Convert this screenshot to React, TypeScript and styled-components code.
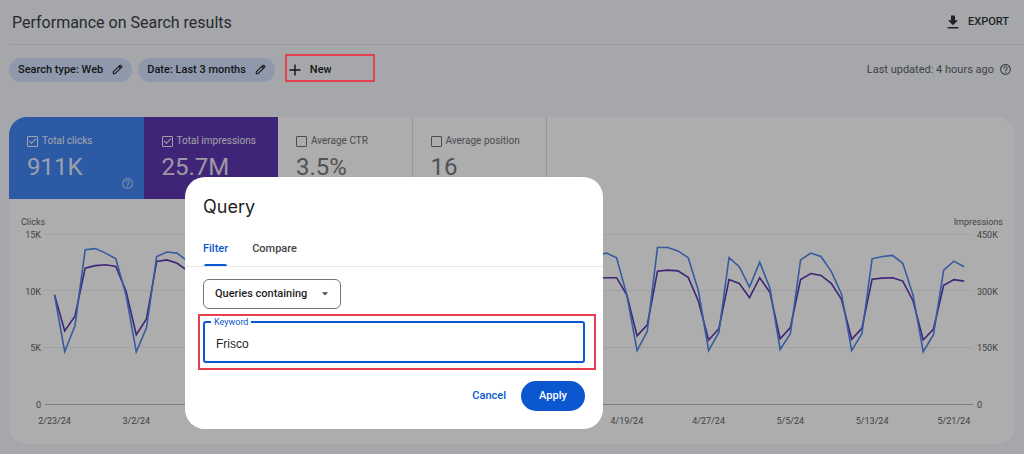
import React, { useState } from 'react';
import styled, { createGlobalStyle, css } from 'styled-components';

const display = `Inter, Roboto, "Liberation Sans", sans-serif`;
const body = `Roboto, "Liberation Sans", sans-serif`;

const GlobalStyle = createGlobalStyle`
  *, *::before, *::after { box-sizing: border-box; }
  body {
    margin: 0;
    background: #f3f6fc;
    color: #3c4043;
    font: 11px/16px ${body};
  }
  button, input, select { font: inherit; color: inherit; margin: 0; }
  h1, h2 { margin: 0; font-weight: 400; }
`;

/* ---------- report page ---------- */

const Page = styled.div`
  min-height: 100vh;
  padding: 0 9px 10px;
`;

const Header = styled.header`
  display: flex;
  align-items: center;
  justify-content: space-between;
  height: 45px;
  margin-right: -9px;
  padding: 1px 15px 0 3px;
  border-bottom: 1px solid #e3e6ec;
`;

const Title = styled.h1`
  font-size: 16px;
  line-height: 20px;
  color: #3c4043;
`;

const PlainButton = styled.button`
  display: inline-flex;
  align-items: center;
  gap: 9px;
  padding: 0;
  border: 0;
  background: none;
  color: #303236;
  font-weight: 500;
  cursor: pointer;
`;

const ExportButton = styled(PlainButton)`
  padding-bottom: 2px;
`;

const FilterBar = styled.div`
  display: flex;
  align-items: center;
  gap: 6px;
  height: 49px;
`;

const Chip = styled.button`
  display: inline-flex;
  align-items: center;
  gap: 9px;
  height: 24px;
  padding: 0 9px;
  border: 0;
  border-radius: 12px;
  background: #d3e2fd;
  color: #1f1f1f;
  font-weight: 500;
  cursor: pointer;
`;

const highlight = css`
  content: '';
  position: absolute;
  border: 2px solid #e5404e;
  pointer-events: none;
  z-index: 3;
`;

const NewFilter = styled.div`
  position: relative;
  margin-left: 4px;
  width: 90px;
  height: 28px;
  display: flex;
  align-items: center;
  padding: 0 4px;
  &::after { ${highlight} inset: -2px 0 2px; }
`;

const NewButton = styled(PlainButton)`
  color: #1f1f1f;
`;

const Updated = styled.div`
  display: flex;
  align-items: center;
  gap: 5px;
  margin-left: auto;
  padding-right: 3px;
  color: #5f6368;
`;

const Card = styled.section`
  margin-top: 23px;
  border-radius: 18px;
  background: #fff;
  overflow: hidden;
`;

const Metrics = styled.div`
  display: flex;
  width: 538px;
`;

const Metric = styled.label<{ $fill?: string }>`
  flex: 1;
  position: relative;
  height: 82px;
  padding: 16px 0 0 18px;
  border-right: 1px solid ${p => p.$fill ?? '#e0e0e0'};
  background: ${p => p.$fill ?? 'transparent'};
  color: ${p => (p.$fill ? '#fff' : '#5f6368')};
  cursor: pointer;
`;

const MetricName = styled.span`
  display: flex;
  align-items: center;
  gap: 4px;
  font-size: 10px;
  opacity: 0.9;
  white-space: nowrap;
`;

const Tick = styled.input`
  appearance: none;
  width: 11px;
  height: 11px;
  border: 1px solid currentColor;
  border-radius: 1px;
  display: grid;
  place-items: center;
  &:checked::before {
    content: '';
    width: 7px;
    height: 4px;
    border: solid currentColor;
    border-width: 0 0 1px 1px;
    transform: translateY(-1px) rotate(-45deg);
  }
`;

const MetricValue = styled.span`
  display: block;
  padding-top: 4px;
  font-size: 24px;
  line-height: 28px;
  opacity: 0.85;
`;

const MetricHelp = styled.span`
  position: absolute;
  right: 9px;
  bottom: 9px;
  display: flex;
  opacity: 0.6;
`;

/* ---------- chart ---------- */

const Chart = styled.div`
  padding: 16px 10px 9px 12px;
  color: #5f6368;
  font-size: 9px;
  line-height: 16px;
`;

const AxisTitles = styled.div`
  display: flex;
  justify-content: space-between;
  margin-bottom: 5px;
  padding-right: 2px;
  line-height: 15px;
`;

const PlotRow = styled.div`
  display: grid;
  grid-template-columns: 20px minmax(0, 1fr) 28px;
  column-gap: 4px;
`;

const Axis = styled.div<{ $align: 'left' | 'right' }>`
  display: flex;
  flex-direction: column;
  justify-content: space-between;
  height: 186px;
  margin: -8px 0;
  text-align: ${p => p.$align};
`;

const Plot = styled.svg`
  display: block;
  width: 100%;
  height: 170px;
  overflow: visible;
  path, line { fill: none; vector-effect: non-scaling-stroke; }
`;

const Dates = styled.div`
  position: relative;
  grid-column: 2;
  height: 30px;
`;

const DateLabel = styled.span`
  position: absolute;
  top: 8px;
  transform: translateX(-50%);
`;

/* ---------- dialog ---------- */

const Backdrop = styled.div`
  position: fixed;
  inset: 0;
  z-index: 2;
  padding: 177px 185px 0;
  background: rgba(0, 0, 0, 0.32);
`;

const Dialog = styled.form`
  width: 418px;
  padding: 18px 18px;
  border-radius: 20px;
  background: #fff;
  font-weight: 500;
`;

const DialogTitle = styled.h2`
  font-family: ${display};
  font-size: 18px;
  line-height: 24px;
  color: #1f1f1f;
`;

const Tabs = styled.div`
  display: flex;
  gap: 24px;
  margin: 12px -18px 0;
  padding: 0 18px;
  border-bottom: 1px solid #e6e8eb;
`;

const Tab = styled.button<{ $active?: boolean }>`
  position: relative;
  height: 35px;
  padding: 0;
  border: 0;
  background: none;
  color: ${p => (p.$active ? '#0b57d0' : '#444746')};
  cursor: pointer;
  &::after {
    content: '';
    position: absolute;
    inset: auto 1px 0;
    height: 2px;
    border-radius: 2px 2px 0 0;
    background: ${p => (p.$active ? '#0b57d0' : 'transparent')};
  }
`;

const SelectBox = styled.div`
  display: grid;
  align-items: center;
  width: 138px;
  margin-top: 12px;
  > * { grid-area: 1 / 1; }
  > svg { justify-self: end; margin-right: 13px; pointer-events: none; }
`;

const Select = styled.select`
  appearance: none;
  width: 100%;
  height: 30px;
  padding: 0 11px;
  border: 1px solid #747775;
  border-radius: 6px;
  background: #fff;
  color: #1f1f1f;
  font-weight: 500;
`;

const Field = styled.div`
  position: relative;
  margin-top: 12px;
  &::after { ${highlight} inset: -7px -11px -7px -5px; }
`;

const FieldLabel = styled.label`
  position: absolute;
  top: -5px;
  left: 8px;
  padding: 0 3px;
  background: #fff;
  color: #0b57d0;
  font: 9px/12px ${body};
`;

const TextInput = styled.input`
  display: block;
  width: 100%;
  height: 42px;
  padding: 4px 11px 0;
  border: 2px solid #0b57d0;
  border-radius: 3px;
  outline: 0;
  color: #1f1f1f;
  font: 12px/16px "Liberation Sans", sans-serif;
`;

const Actions = styled.div`
  display: flex;
  justify-content: flex-end;
  align-items: center;
  gap: 15px;
  margin-top: 18px;
`;

const TextButton = styled.button`
  padding: 0;
  border: 0;
  background: none;
  color: #0b57d0;
  cursor: pointer;
`;

const PrimaryButton = styled.button`
  width: 64px;
  height: 30px;
  padding: 0;
  border: 0;
  border-radius: 15px;
  background: #0b57d0;
  color: #fff;
  cursor: pointer;
`;

/* ---------- icons ---------- */

const Pencil = () => (
  <svg width="11" height="11" viewBox="0 0 12 12" fill="none" stroke="currentColor" strokeWidth="1.2" strokeLinejoin="round">
    <path d="M1.4 10.6v-1.9L8.6 1.5a.7.7 0 0 1 1 0l.9.9a.7.7 0 0 1 0 1L3.3 10.6z" />
    <path d="M7.7 2.7l1.6 1.6" strokeWidth="1.9" />
  </svg>
);

const Plus = () => (
  <svg width="12" height="12" viewBox="0 0 12 12" stroke="currentColor" strokeWidth="1.4">
    <path d="M6 .5v11M.5 6h11" />
  </svg>
);

const Download = () => (
  <svg width="12" height="14" viewBox="0 0 12 14" fill="currentColor">
    <path d="M4 .5h4v4.7h3L6 10.2 1 5.2h3zM.6 12h10.8v1.5H.6z" />
  </svg>
);

const Help = () => (
  <svg width="13" height="13" viewBox="0 0 24 24" fill="currentColor">
    <path d="M11 18h2v-2h-2v2zm1-16C6.48 2 2 6.48 2 12s4.48 10 10 10 10-4.48 10-10S17.52 2 12 2zm0 18c-4.41 0-8-3.59-8-8s3.59-8 8-8 8 3.59 8 8-3.59 8-8 8zm0-14c-2.21 0-4 1.79-4 4h2c0-1.1.9-2 2-2s2 .9 2 2c0 2-3 1.75-3 5h2c0-2.25 3-2.5 3-5 0-2.21-1.79-4-4-4z" />
  </svg>
);

const Caret = () => (
  <svg width="6" height="4" viewBox="0 0 6 4" fill="#444746">
    <path d="M0 .3h6L3 3.6z" />
  </svg>
);

/* ---------- data, in thousands per day from 2/23/24 ---------- */

const clickWeek = [9.7, 4.7, 6.8, 13.1, 13.5, 13.4, 12.7];
const clicks = [
  9.7, 4.7, 7.0, 13.7, 13.8, 13.4, 12.9,
  9.7, 4.7, 6.8, 13.1, 13.5, 13.4, 12.7,
  ...clickWeek, ...clickWeek, ...clickWeek, ...clickWeek, ...clickWeek,
  9.7, 4.7, 6.8, 13.1, 13.2, 13.4, 13.0,
  9.7, 4.8, 6.5, 13.9, 13.9, 13.6, 13.0,
  10.1, 4.8, 6.4, 13.0, 12.2, 10.4, 12.6,
  10.3, 4.9, 6.3, 12.8, 13.4, 13.1, 11.8,
  9.8, 4.8, 6.3, 12.9, 13.1, 13.2, 12.5,
  9.7, 4.7, 6.2, 11.9, 12.7, 12.2,
];

const impressionWeek = [301, 186, 228, 372, 376, 370, 352];
const impressions = [
  292, 196, 235, 362, 369, 371, 367,
  301, 186, 228, 380, 384, 375, 356,
  ...impressionWeek, ...impressionWeek, ...impressionWeek, ...impressionWeek, ...impressionWeek,
  295, 184, 220, 336, 336, 337, 337,
  291, 183, 212, 354, 357, 355, 338,
  275, 172, 202, 332, 322, 284, 337,
  298, 175, 205, 332, 348, 343, 322,
  280, 174, 203, 333, 336, 337, 328,
  276, 172, 201, 317, 332, 328,
];

const dates = ['2/23/24', '3/2/24', '3/10/24', '3/18/24', '3/26/24', '4/3/24', '4/11/24', '4/19/24', '4/27/24', '5/5/24', '5/13/24', '5/21/24'];

const SPAN = 90.8;
const xOf = (day: number) => day + 0.93;
const pathOf = (values: number[], max: number) =>
  'M' + values.map((v, i) => `${xOf(i)} ${(170 * (1 - v / max)).toFixed(1)}`).join('L');

function PerformanceChart() {
  return (
    <Chart>
      <AxisTitles><span>Clicks</span><span>Impressions</span></AxisTitles>
      <PlotRow>
        <Axis $align="right"><span>15K</span><span>10K</span><span>5K</span><span>0</span></Axis>
        <Plot viewBox={`0 0 ${SPAN} 170`} preserveAspectRatio="none" role="img" aria-label="Clicks and impressions per day">
          {[0, 56, 113].map(y => (
            <line key={y} x1="0" x2={SPAN} y1={y - 0.5} y2={y - 0.5} stroke="#eeeeee" />
          ))}
          <line x1="0" x2={SPAN} y1="169.5" y2="169.5" stroke="#b9b9b9" />
          <path d={pathOf(impressions, 450)} stroke="#5e35b1" strokeWidth="1.6" />
          <path d={pathOf(clicks, 15)} stroke="#4f86ec" strokeWidth="1.6" />
        </Plot>
        <Axis $align="left"><span>450K</span><span>300K</span><span>150K</span><span>0</span></Axis>
        <Dates>
          {dates.map((d, i) => (
            <DateLabel key={d} style={{ left: `${(xOf(i * 8) / SPAN) * 100}%` }}>{d}</DateLabel>
          ))}
        </Dates>
      </PlotRow>
    </Chart>
  );
}

function QueryDialog() {
  const [keyword, setKeyword] = useState('Frisco');
  return (
    <Backdrop>
      <Dialog role="dialog" aria-labelledby="query-title" onSubmit={e => e.preventDefault()}>
        <DialogTitle id="query-title">Query</DialogTitle>
        <Tabs role="tablist">
          <Tab type="button" role="tab" aria-selected="true" $active>Filter</Tab>
          <Tab type="button" role="tab" aria-selected="false">Compare</Tab>
        </Tabs>
        <SelectBox>
          <Select aria-label="Match type" defaultValue="containing">
            <option value="containing">Queries containing</option>
          </Select>
          <Caret />
        </SelectBox>
        <Field>
          <TextInput id="keyword" value={keyword} onChange={e => setKeyword(e.target.value)} />
          <FieldLabel htmlFor="keyword">Keyword</FieldLabel>
        </Field>
        <Actions>
          <TextButton type="button">Cancel</TextButton>
          <PrimaryButton type="submit">Apply</PrimaryButton>
        </Actions>
      </Dialog>
    </Backdrop>
  );
}

const metrics = [
  { name: 'Total clicks', value: '911K', fill: '#4285f4', help: true },
  { name: 'Total impressions', value: '25.7M', fill: '#5e35b1' },
  { name: 'Average CTR', value: '3.5%' },
  { name: 'Average position', value: '16' },
];

export default function App() {
  return (
    <>
      <GlobalStyle />
      <Page>
        <Header>
          <Title>Performance on Search results</Title>
          <ExportButton type="button"><Download />EXPORT</ExportButton>
        </Header>
        <FilterBar>
          <Chip type="button">Search type: Web<Pencil /></Chip>
          <Chip type="button">Date: Last 3 months<Pencil /></Chip>
          <NewFilter>
            <NewButton type="button"><Plus />New</NewButton>
          </NewFilter>
          <Updated>Last updated: 4 hours ago<Help /></Updated>
        </FilterBar>
        <Card>
          <Metrics>
            {metrics.map(m => (
              <Metric key={m.name} $fill={m.fill}>
                <MetricName><Tick type="checkbox" defaultChecked={!!m.fill} />{m.name}</MetricName>
                <MetricValue>{m.value}</MetricValue>
                {m.help && <MetricHelp><Help /></MetricHelp>}
              </Metric>
            ))}
          </Metrics>
          <PerformanceChart />
        </Card>
      </Page>
      <QueryDialog />
    </>
  );
}
